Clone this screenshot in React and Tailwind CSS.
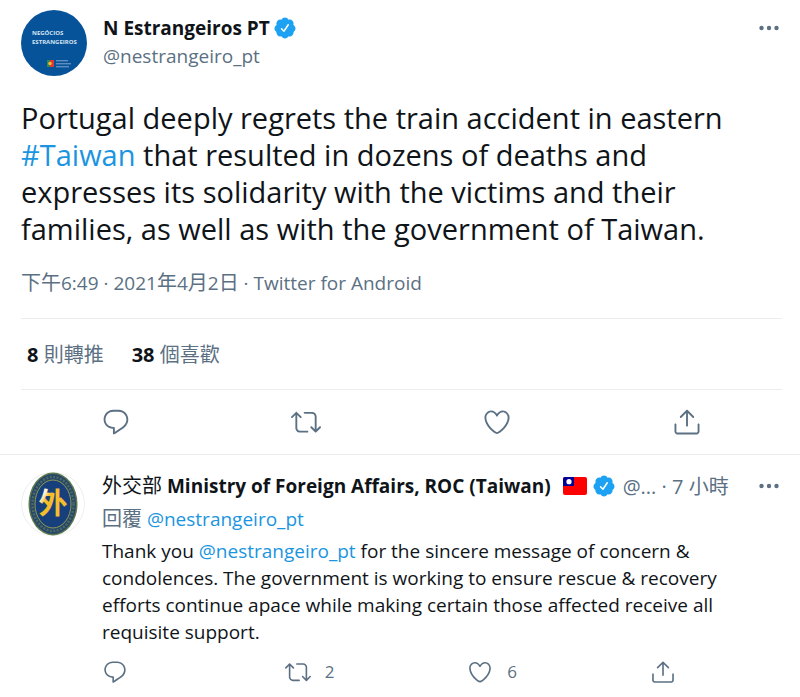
const ICONS = {
  reply:
    "M14.046 2.242l-4.148-.01h-.002c-4.374 0-7.8 3.427-7.8 7.802 0 4.098 3.186 7.206 7.465 7.37v3.828c0 .108.044.286.12.403.142.225.384.347.632.347.138 0 .277-.038.402-.118.264-.168 6.473-4.14 8.088-5.506 1.902-1.61 3.04-3.97 3.043-6.312v-.017c-.006-4.367-3.43-7.787-7.8-7.788zm3.787 12.972c-1.134.96-4.862 3.405-6.772 4.643V16.67c0-.414-.335-.75-.75-.75h-.396c-3.66 0-6.318-2.476-6.318-5.886 0-3.534 2.768-6.302 6.3-6.302l4.147.01h.002c3.532 0 6.3 2.766 6.302 6.296-.003 1.91-.942 3.844-2.514 5.176z",
  retweet:
    "M23.77 15.67c-.292-.293-.767-.293-1.06 0l-2.22 2.22V7.65c0-2.068-1.683-3.75-3.75-3.75h-5.85c-.414 0-.75.336-.75.75s.336.75.75.75h5.85c1.24 0 2.25 1.01 2.25 2.25v10.24l-2.22-2.22c-.293-.293-.768-.293-1.06 0s-.294.768 0 1.06l3.5 3.5c.145.147.337.22.53.22s.383-.072.53-.22l3.5-3.5c.294-.292.294-.767 0-1.06zm-10.66 3.28H7.26c-1.24 0-2.25-1.01-2.25-2.25V6.46l2.22 2.22c.148.147.34.22.532.22s.384-.073.53-.22c.293-.293.293-.768 0-1.06l-3.5-3.5c-.293-.294-.768-.294-1.06 0l-3.5 3.5c-.294.292-.294.767 0 1.06s.767.293 1.06 0l2.22-2.22V16.7c0 2.068 1.683 3.75 3.75 3.75h5.85c.414 0 .75-.336.75-.75s-.337-.75-.75-.75z",
  like: "M12 21.638h-.014C9.403 21.59 1.95 14.856 1.95 8.478c0-3.064 2.525-5.754 5.403-5.754 2.29 0 3.83 1.58 4.646 2.73.814-1.148 2.354-2.73 4.645-2.73 2.88 0 5.404 2.69 5.404 5.755 0 6.376-7.454 13.11-10.037 13.157H12zM7.354 4.225c-2.08 0-3.903 1.988-3.903 4.255 0 5.74 7.034 11.596 8.55 11.658 1.518-.062 8.55-5.917 8.55-11.658 0-2.267-1.823-4.255-3.903-4.255-2.528 0-3.94 2.936-3.952 2.965-.23.562-1.156.562-1.387 0-.014-.03-1.425-2.965-3.954-2.965z",
  share:
    "M17.53 7.47l-5-5c-.293-.293-.768-.293-1.06 0l-5 5c-.294.293-.294.768 0 1.06s.767.294 1.06 0l3.72-3.72V15c0 .414.336.75.75.75s.75-.336.75-.75V4.81l3.72 3.72c.146.147.338.22.53.22s.384-.072.53-.22c.293-.293.293-.767 0-1.06zM19.708 21.944H4.292C3.028 21.944 2 20.916 2 19.652V14c0-.414.336-.75.75-.75s.75.336.75.75v5.652c0 .437.355.792.792.792h15.416c.437 0 .792-.355.792-.792V14c0-.414.336-.75.75-.75s.75.336.75.75v5.652c0 1.264-1.028 2.292-2.292 2.292z",
  verified:
    "M22.5 12.5c0-1.58-.875-2.95-2.148-3.6.154-.435.238-.905.238-1.4 0-2.21-1.71-3.998-3.818-3.998-.47 0-.92.084-1.336.25C14.818 2.415 13.51 1.5 12 1.5s-2.816.917-3.437 2.25c-.415-.165-.866-.25-1.336-.25-2.11 0-3.818 1.79-3.818 4 0 .494.083.964.237 1.4-1.272.65-2.147 2.018-2.147 3.6 0 1.495.782 2.798 1.942 3.486-.02.17-.032.34-.032.514 0 2.21 1.708 4 3.818 4 .47 0 .92-.086 1.335-.25.62 1.334 1.926 2.25 3.437 2.25 1.512 0 2.818-.916 3.437-2.25.415.163.865.248 1.336.248 2.11 0 3.818-1.79 3.818-4 0-.174-.012-.344-.033-.513 1.158-.687 1.943-1.99 1.943-3.484zm-6.616-3.334l-4.334 6.5c-.145.217-.382.334-.625.334-.143 0-.288-.04-.416-.126l-.115-.094-2.415-2.415c-.293-.293-.293-.768 0-1.06s.768-.294 1.06 0l1.77 1.767 3.825-5.74c.23-.345.696-.436 1.04-.207.346.23.44.696.21 1.04z",
};

function Icon({ name, className }) {
  return (
    <svg viewBox="0 0 24 24" fill="currentColor" className={className} aria-hidden="true">
      <path d={ICONS[name]} />
    </svg>
  );
}

function Verified() {
  return <Icon name="verified" className="size-6 shrink-0 text-[#1da1f2]" />;
}

function MoreButton() {
  return (
    <button type="button" aria-label="More" className="flex h-6 items-center pr-[3px] text-[#5b7083]">
      <svg viewBox="0 0 20 6" fill="currentColor" className="h-[6px] w-5">
        <circle cx="2.5" cy="3" r="2.2" />
        <circle cx="10" cy="3" r="2.2" />
        <circle cx="17.5" cy="3" r="2.2" />
      </svg>
    </button>
  );
}

function Flag() {
  return (
    <svg viewBox="0 0 24 18" className="h-[18px] w-6 shrink-0" role="img" aria-label="Taiwan">
      <rect width="24" height="18" rx="2" fill="#fe0000" />
      <path d="M2 0h9v9H0V2a2 2 0 0 1 2-2z" fill="#000095" />
      <circle cx="6" cy="4.7" r="2.6" fill="#fff" />
    </svg>
  );
}

function PortugalAvatar() {
  return (
    <svg viewBox="0 0 66 66" className="size-[66px] shrink-0 rounded-full">
      <rect width="66" height="66" fill="#07539a" />
      <g fill="#d5e4f0" fontFamily="'Open Sans', sans-serif" fontWeight="700" fontSize="6">
        <text x="11" y="25">NEGÓCIOS</text>
        <text x="11" y="34">ESTRANGEIROS</text>
      </g>
      <rect x="26" y="50" width="3" height="7" fill="#2f8a4c" />
      <rect x="29" y="50" width="4" height="7" fill="#e0382f" />
      <circle cx="29" cy="53.5" r="1.8" fill="#f0b840" />
      <g fill="#5f8fc0">
        <rect x="35" y="50" width="12" height="1.4" />
        <rect x="35" y="53" width="15" height="1.4" />
        <rect x="35" y="56" width="13" height="1.4" />
      </g>
    </svg>
  );
}

function MinistryAvatar() {
  return (
    <svg viewBox="0 0 64 64" className="size-16 shrink-0">
      <defs>
        <linearGradient id="emblem" x1="0" y1="0" x2="0.8" y2="0.8">
          <stop offset="0.32" stopColor="#fdf6dc" />
          <stop offset="0.46" stopColor="#f6bd2a" />
        </linearGradient>
      </defs>
      <circle cx="32" cy="32" r="31.5" fill="#fff" stroke="#eceef0" />
      <ellipse cx="32" cy="32" rx="24.5" ry="31.5" fill="#5f7a4c" />
      <ellipse cx="32" cy="32" rx="23" ry="30" fill="#27476a" />
      <ellipse cx="32" cy="32" rx="20.5" ry="27" fill="none" stroke="#4d6a62" strokeWidth="2.5" strokeDasharray="2 1.5" />
      <ellipse cx="32" cy="32" rx="18" ry="24" fill="#173f7c" stroke="#8c9a55" />
      <text
        x="32"
        y="42"
        textAnchor="middle"
        fontFamily="'Noto Sans CJK TC', sans-serif"
        fontWeight="700"
        fontSize="29"
        fill="url(#emblem)"
      >
        外
      </text>
    </svg>
  );
}

function Action({ icon, label, count, small }) {
  return (
    <button type="button" aria-label={label} className="flex items-center gap-[14px] text-[#5b7083]">
      <Icon name={icon} className={small ? "size-[26px]" : "size-[30px]"} />
      {count && <span className="text-[17px] leading-6">{count}</span>}
    </button>
  );
}

function Mention({ children }) {
  return (
    <a href="#" className="text-[#1b95e0]">
      {children}
    </a>
  );
}

function MainTweet() {
  return (
    <article className="pt-[10px] pr-[18px] pl-[21px]">
      <header className="flex gap-4">
        <PortugalAvatar />
        <div className="min-w-0 flex-1 pt-1 text-[19px] leading-7">
          <div className="flex items-center gap-[3px]">
            <span className="font-bold">N Estrangeiros PT</span>
            <Verified />
          </div>
          <div className="text-[#5b7083]">@nestrangeiro_pt</div>
        </div>
        <div className="pt-[6px]">
          <MoreButton />
        </div>
      </header>
      <p className="mt-[23px] text-[29px] leading-[37px]">
        Portugal deeply regrets the train accident in eastern <Mention>#Taiwan</Mention> that resulted in
        dozens of deaths and expresses its solidarity with the victims and their families, as well as with the
        government of Taiwan.
      </p>
      <div className="mt-[22px] pb-[21px] text-[19px] leading-7 text-[#5b7083]">
        <span className="text-[20px]">下午</span>6:49 · 2021<span className="text-[20px]">年</span>4
        <span className="text-[20px]">月</span>2<span className="text-[20px]">日</span> · Twitter for Android
      </div>
      <div className="flex gap-7 border-y border-[#ebeef0] px-[6px] pt-[22px] pb-5 text-[20px] leading-7 text-[#5b7083]">
        <span>
          <b className="text-[#0f1419]">8</b> 則轉推
        </span>
        <span>
          <b className="text-[#0f1419]">38</b> 個喜歡
        </span>
      </div>
      <div className="grid grid-cols-4 justify-items-center py-[17px]">
        <Action icon="reply" label="Reply" />
        <Action icon="retweet" label="Retweet" />
        <Action icon="like" label="Like" />
        <Action icon="share" label="Share" />
      </div>
    </article>
  );
}

function ReplyTweet() {
  return (
    <article className="flex gap-[17px] border-t border-[#ebeef0] pt-[17px] pr-[18px] pl-[21px]">
      <MinistryAvatar />
      <div className="min-w-0 flex-1 text-[19px] leading-[27px]">
        <div className="flex items-center">
          <span className="whitespace-nowrap">
            <span className="text-[20px]">外交部</span> <b>Ministry of Foreign Affairs, ROC (Taiwan)</b>
          </span>
          <span className="ml-3 flex items-center gap-[5px]">
            <Flag />
            <Verified />
          </span>
          <span className="ml-[7px] whitespace-nowrap text-[20px] text-[#5b7083]">@... · 7 小時</span>
          <span className="ml-auto">
            <MoreButton />
          </span>
        </div>
        <div className="mt-[5px] text-[#5b7083]">
          <span className="text-[20px]">回覆</span> <Mention>@nestrangeiro_pt</Mention>
        </div>
        <p className="mt-[5px] pr-9">
          Thank you <Mention>@nestrangeiro_pt</Mention> for the sincere message of concern & condolences. The
          government is working to ensure rescue & recovery efforts continue apace while making certain those
          affected receive all requisite support.
        </p>
        <div className="mt-[13px] flex max-w-[574px] pb-3">
          <div className="flex-1">
            <Action small icon="reply" label="Reply" />
          </div>
          <div className="flex-1">
            <Action small icon="retweet" label="Retweet" count="2" />
          </div>
          <div className="flex-1">
            <Action small icon="like" label="Like" count="6" />
          </div>
          <Action small icon="share" label="Share" />
        </div>
      </div>
    </article>
  );
}

export default function App() {
  return (
    <main className="bg-white font-['Open_Sans','Noto_Sans_CJK_TC',sans-serif] text-[#0f1419]">
      <MainTweet />
      <ReplyTweet />
    </main>
  );
}
